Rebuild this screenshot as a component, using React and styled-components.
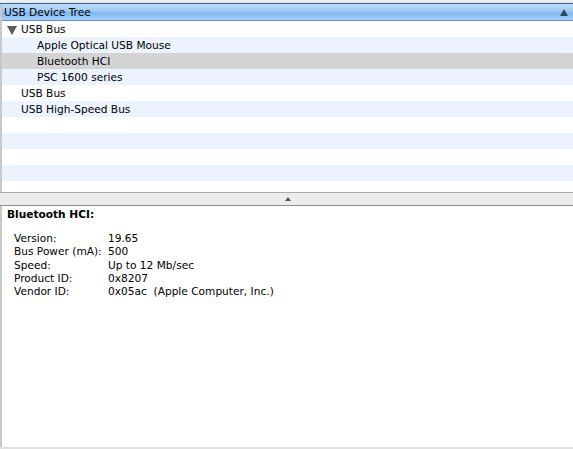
import React from 'react';
import styled, { createGlobalStyle } from 'styled-components';

const Global = createGlobalStyle`
  html, body {
    margin: 0;
    padding: 0;
    background: #ffffff;
  }
  body {
    font-family: "Lucida Grande", "DejaVu Sans", sans-serif;
    font-size: 10.6px;
    color: #000;
  }
`;

const rows = [
  { label: 'USB Bus', level: 0, open: true },
  { label: 'Apple Optical USB Mouse', level: 1 },
  { label: 'Bluetooth HCI', level: 1, selected: true },
  { label: 'PSC 1600 series', level: 1 },
  { label: 'USB Bus', level: 0 },
  { label: 'USB High-Speed Bus', level: 0 },
  { label: '', level: 0 },
  { label: '', level: 0 },
  { label: '', level: 0 },
  { label: '', level: 0 },
];

const details = [
  ['Version:', '19.65'],
  ['Bus Power (mA):', '500'],
  ['Speed:', 'Up to 12 Mb/sec'],
  ['Product ID:', '0x8207'],
  ['Vendor ID:', '0x05ac  (Apple Computer, Inc.)'],
];

const App = () => {
  return (
    <Window>
      <Global />
      <TopStrip />
      <TreePane>
        <Header>
          <span>USB Device Tree</span>
          <SortArrow />
        </Header>
        {rows.map((r, i) => (
          <Row key={i} $odd={i % 2 === 1} $selected={r.selected}>
            <Label $level={r.level}>
              {r.open && <Disclosure />}
              {r.label}
            </Label>
          </Row>
        ))}
        <Filler />
      </TreePane>
      <Splitter>
        <Grip />
      </Splitter>
      <DetailPane>
        <Title>Bluetooth HCI:</Title>
        <DetailGrid>
          {details.map(([k, v]) => (
            <React.Fragment key={k}>
              <Key>{k}</Key>
              <Value>{v}</Value>
            </React.Fragment>
          ))}
        </DetailGrid>
      </DetailPane>
      <BottomEdge />
    </Window>
  );
};

const Window = styled.div`
  width: 573px;
  height: 449px;
  display: flex;
  flex-direction: column;
  overflow: hidden;
  background: #fff;
`;

const TopStrip = styled.div`
  height: 3px;
  background: #ededed;
  border-bottom: 1px solid #2a5fb8;
`;

const TreePane = styled.div`
  display: flex;
  flex-direction: column;
  height: 188px;
  border-left: 2px solid #c8c8c8;
`;

const Header = styled.div`
  height: 16px;
  display: flex;
  align-items: center;
  justify-content: space-between;
  padding: 0 5px 0 2px;
  background: linear-gradient(#c0dcf8 0%, #a0c9f4 45%, #7fb8f0 55%, #a6cff8 100%);
  border-bottom: 1px solid #5a93d6;
  color: #000;
`;

const SortArrow = styled.span`
  width: 0;
  height: 0;
  border-left: 4px solid transparent;
  border-right: 4px solid transparent;
  border-bottom: 7px solid #35475f;
`;

const Row = styled.div`
  height: 16px;
  display: flex;
  align-items: center;
  background: ${(p) => (p.$selected ? '#d4d4d4' : p.$odd ? '#edf3fe' : '#ffffff')};
`;

const Label = styled.span`
  display: flex;
  align-items: center;
  padding-left: ${(p) => (p.$level === 1 ? 35 : 19)}px;
  position: relative;
`;

const Disclosure = styled.span`
  position: absolute;
  left: 5px;
  top: 3px;
  width: 0;
  height: 0;
  border-left: 5px solid transparent;
  border-right: 5px solid transparent;
  border-top: 9px solid #5a5a5a;
`;

const Filler = styled.div`
  flex: 1;
  background: #fff;
`;

const Splitter = styled.div`
  height: 12px;
  display: flex;
  align-items: center;
  justify-content: center;
  background: #ececec;
  border-top: 1px solid #a8a8a8;
  border-bottom: 1px solid #8e8e8e;
`;

const Grip = styled.span`
  width: 0;
  height: 0;
  margin-left: 2px;
  border-left: 3px solid transparent;
  border-right: 3px solid transparent;
  border-bottom: 4px solid #555;
`;

const DetailPane = styled.div`
  flex: 1;
  border-left: 2px solid #c8c8c8;
  padding: 1px 5px;
`;

const Title = styled.div`
  font-weight: bold;
  height: 14px;
  line-height: 14px;
`;

const DetailGrid = styled.div`
  display: grid;
  grid-template-columns: 94px auto;
  margin: 11px 0 0 7px;
  line-height: 13.3px;
`;

const Key = styled.span``;
const Value = styled.span`
  white-space: pre;
`;

const BottomEdge = styled.div`
  height: 2px;
  background: #e0e0e0;
`;

export default App;
